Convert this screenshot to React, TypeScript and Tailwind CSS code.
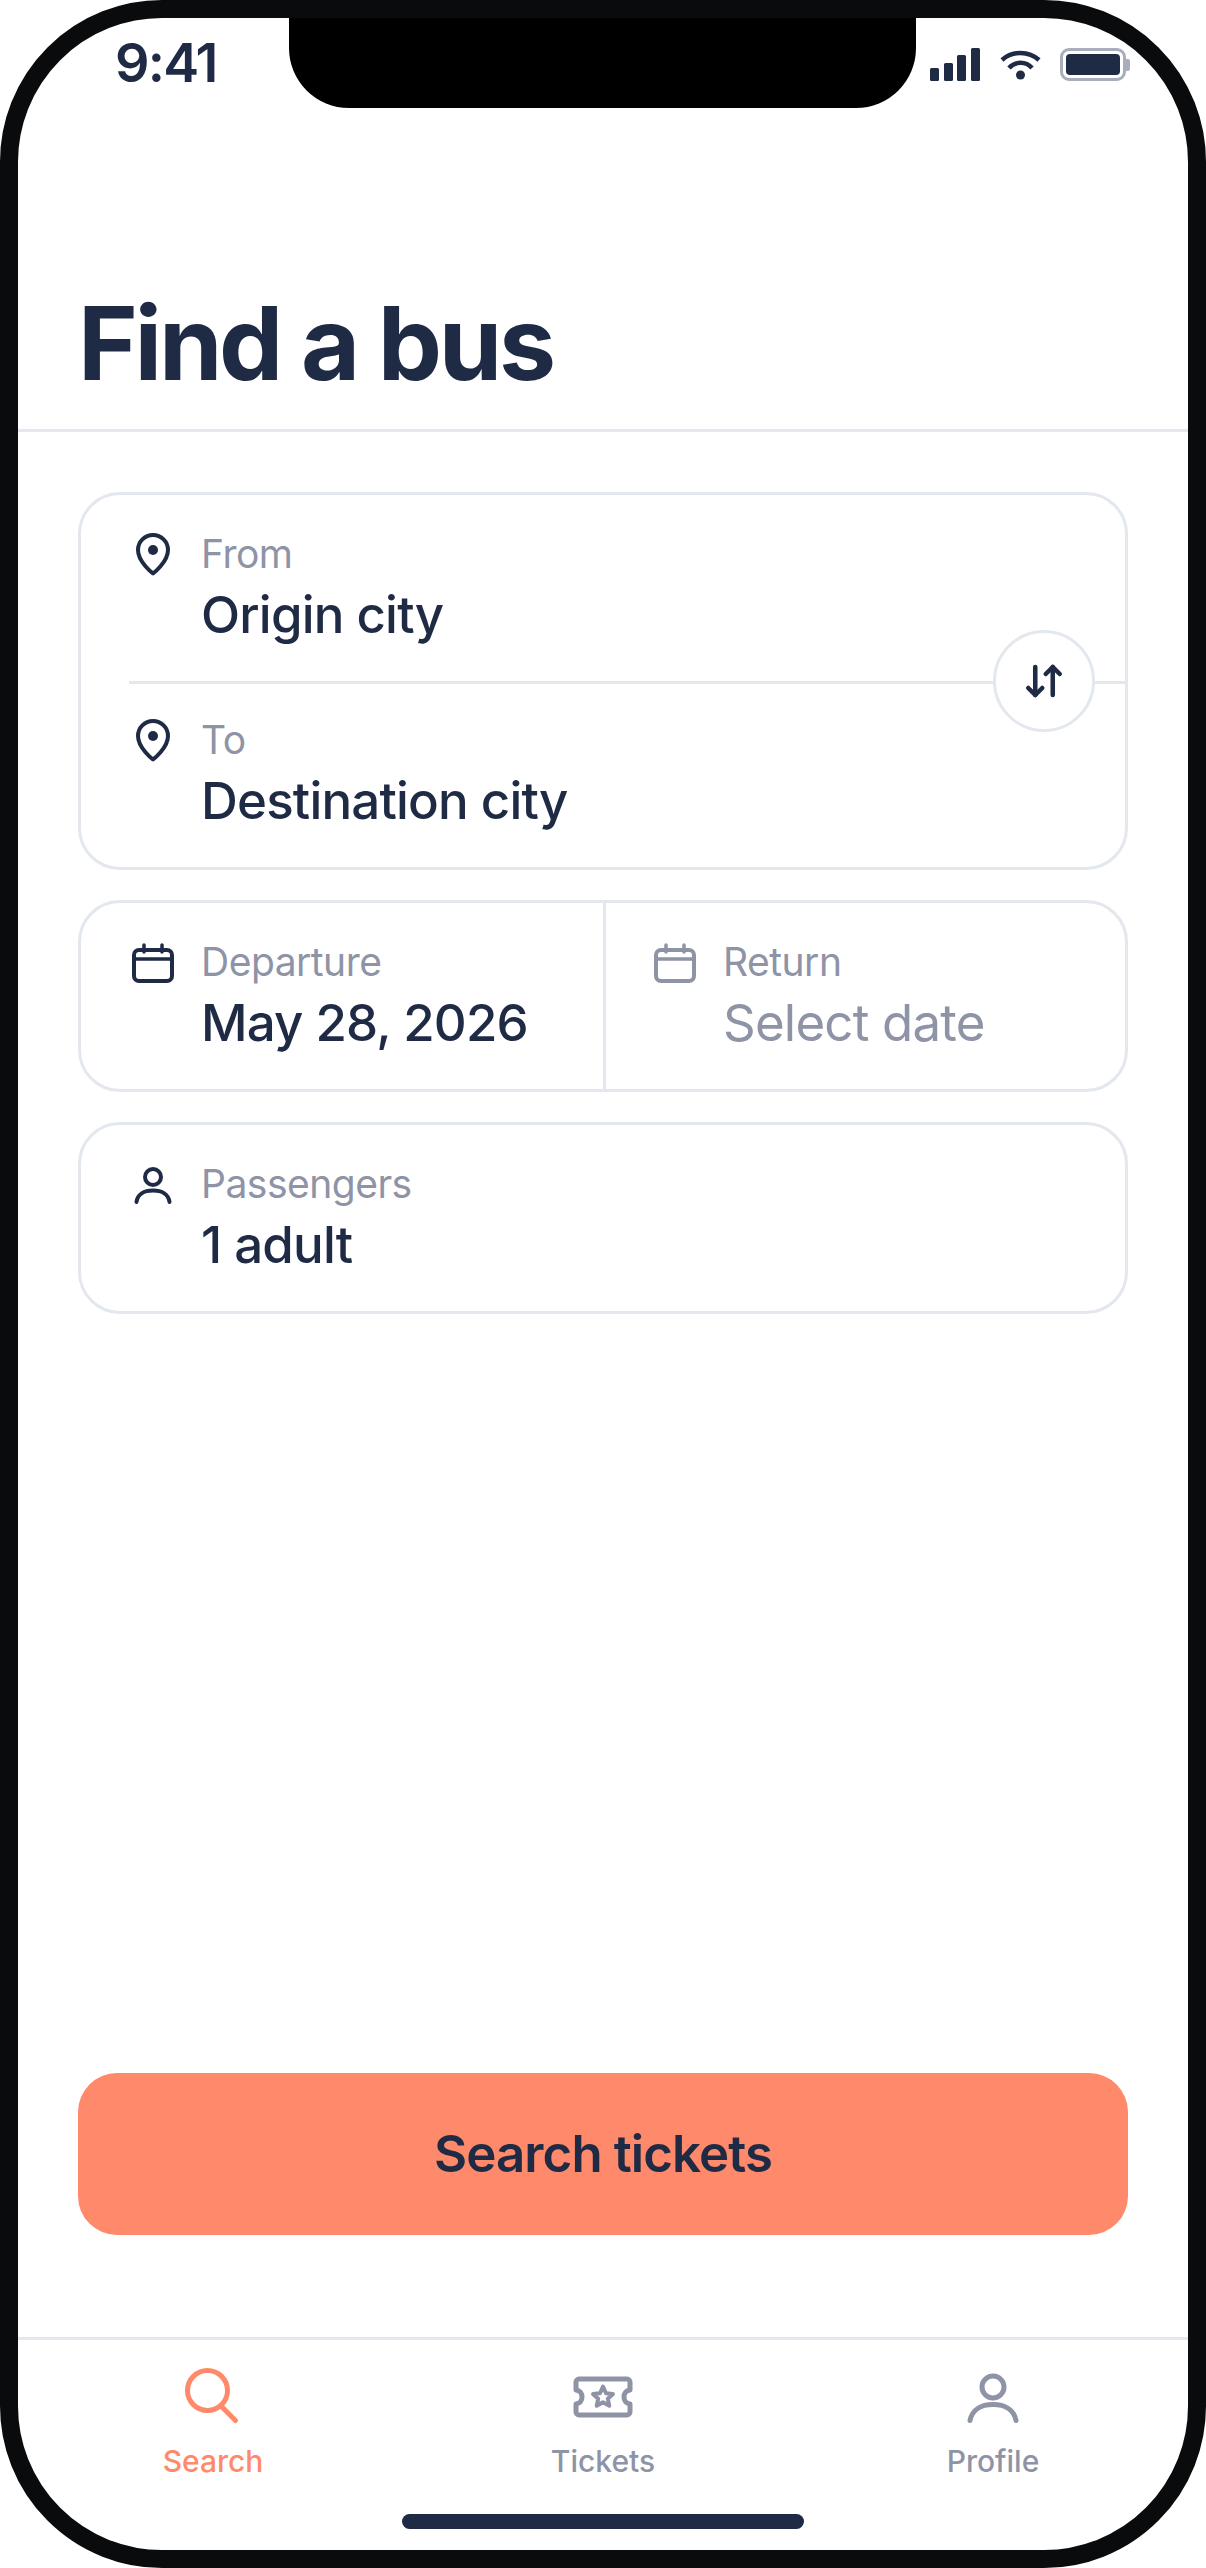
import { ArrowDownUp } from 'lucide-react';
import type { ReactNode } from 'react';

const NAVY = '#1f2a44';
const MUTED = '#8e93a6';
const CORAL = '#ff8a6b';

const PinIcon = () => (
  <svg width="54" height="54" viewBox="0 0 54 54" fill="none" className="shrink-0">
    <path
      d="M27 48.5C27 48.5 12 37 12 25C12 16.7 18.7 10 27 10C35.3 10 42 16.7 42 25C42 37 27 48.5 27 48.5Z"
      stroke={NAVY}
      strokeWidth="4"
      strokeLinejoin="round"
    />
    <circle cx="27" cy="25" r="5" fill={NAVY} />
  </svg>
);

const CalendarIcon = ({ color = NAVY }: { color?: string }) => (
  <svg width="54" height="54" viewBox="0 0 54 54" fill="none" className="shrink-0">
    <rect x="8" y="17" width="38" height="31" rx="5" stroke={color} strokeWidth="4" />
    <path d="M8 26H46M18 12V19M36 12V19" stroke={color} strokeWidth="3.5" strokeLinecap="round" />
  </svg>
);

const PersonIcon = () => (
  <svg width="54" height="54" viewBox="0 0 54 54" fill="none" className="shrink-0">
    <circle cx="27" cy="22" r="8" stroke={NAVY} strokeWidth="4" />
    <path d="M10.500 47C11.500 39.500 18 35.500 27 35.500C36 35.500 42.500 39.500 43.500 47" stroke={NAVY} strokeWidth="4" strokeLinecap="round" />
  </svg>
);

const SearchIcon = () => (
  <svg width="66" height="66" viewBox="0 0 66 66" fill="none">
    <circle cx="27.500" cy="25.500" r="20" stroke={CORAL} strokeWidth="5" />
    <path d="M41 41L55.500 55.500" stroke={CORAL} strokeWidth="5" strokeLinecap="round" />
  </svg>
);

const TicketIcon = () => (
  <svg width="66" height="66" viewBox="0 0 66 66" fill="none">
    <path
      d="M9 14H57C58.500 14 60 15.500 60 17V25C56 25.500 54 28.500 54 32C54 35.500 56 38.500 60 39V47C60 48.500 58.500 50 57 50H9C7.500 50 6 48.500 6 47V39C10 38.500 12 35.500 12 32C12 28.500 10 25.500 6 25V17C6 15.500 7.500 14 9 14Z"
      stroke={MUTED}
      strokeWidth="5"
      strokeLinejoin="round"
    />
    <path
      d="M33 21.500L36 28.200L43 29L37.800 33.700L39.300 40.800L33 37.200L26.700 40.800L28.200 33.700L23 29L30 28.200Z"
      stroke={MUTED}
      strokeWidth="4"
      strokeLinejoin="round"
    />
  </svg>
);

const ProfileIcon = () => (
  <svg width="66" height="66" viewBox="0 0 66 66" fill="none">
    <circle cx="33" cy="22" r="11" stroke={MUTED} strokeWidth="5" />
    <path d="M10 55.500C12 45 21 39.500 33 39.500C45 39.500 54 45 56 55.500" stroke={MUTED} strokeWidth="5" strokeLinecap="round" />
  </svg>
);

const Field = ({ icon, label, value, muted }: { icon: ReactNode; label: string; value: string; muted?: boolean }) => (
  <div className="flex gap-[21px]">
    {icon}
    <div className="flex flex-col pt-[2px]">
      <span className="text-[39px] leading-[54px] tracking-[-0.5px] text-[#8e93a6]">{label}</span>
      <span className={`mt-[1px] text-[51px] leading-[66px] tracking-[-0.8px] ${muted ? 'text-[#8e93a6] font-normal' : 'text-[#1f2a44] font-medium'}`}>{value}</span>
    </div>
  </div>
);

const StatusIcons = () => (
  <div className="flex items-center">
    <svg width="50" height="33" viewBox="0 0 50 33" fill={NAVY}>
      <rect x="0" y="20" width="9" height="13" rx="1.500" />
      <rect x="14" y="15" width="9" height="18" rx="1.500" />
      <rect x="27" y="7" width="9" height="26" rx="1.500" />
      <rect x="41" y="0" width="9" height="33" rx="1.500" />
    </svg>
    <svg width="41" height="30" viewBox="0 0 41 30" fill="none" stroke={NAVY} strokeWidth="4.500" className="ml-[20px]">
      <path d="M2 10C12 0.500 29 0.500 39 10" />
      <path d="M9 18C15 11 26 11 32 18" />
      <circle cx="20.500" cy="25" r="4.500" fill={NAVY} stroke="none" />
    </svg>
    <div className="flex items-center ml-[19px]">
      <div className="w-[66px] h-[33px] rounded-[9px] border-[3px] border-[#a9aebd] p-[3px]">
        <div className="w-full h-full rounded-[4px] bg-[#1f2a44]" />
      </div>
      <div className="w-[4px] h-[12px] rounded-r-[2px] bg-[#a9aebd]" />
    </div>
  </div>
);

const TabItem = ({ icon, label, active }: { icon: ReactNode; label: string; active?: boolean }) => (
  <div className="flex-1 flex flex-col items-center gap-[9px]">
    <div className="h-[66px] flex items-center justify-center">{icon}</div>
    <span className={`text-[30px] leading-[42px] font-medium ${active ? 'text-[#ff8a6b]' : 'text-[#8e93a6]'}`}>{label}</span>
  </div>
);

export default function App() {
  return (
    <div className="w-[1206px] h-[2568px] bg-white">
      <div
        className="relative w-full h-full rounded-[162px] border-[18px] border-[#0a0b0d] bg-white overflow-hidden flex flex-col"
        style={{ fontFamily: 'Inter, "Liberation Sans", sans-serif' }}
      >
        {/* notch */}
        <div className="absolute top-0 left-[271px] w-[627px] h-[90px] bg-black rounded-b-[60px]" />

        {/* status bar */}
        <div className="h-[75px] shrink-0 flex items-start justify-between pl-[97px] pr-[58px] pt-[30px]">
          <span className="-mt-[2px] text-[54px] leading-[33px] font-semibold tracking-[-1.8px] text-[#1f2a44]">9:41</span>
          <StatusIcons />
        </div>

        {/* header */}
        <div className="h-[339px] shrink-0 flex items-end px-[60px] pb-[28px] border-b-[3px] border-[#e3e7ee]">
          <h1 className="text-[102px] leading-[116px] font-bold text-[#1f2a44] tracking-[-3.3px]">Find a bus</h1>
        </div>

        {/* search form */}
        <div className="flex-1 flex flex-col px-[60px] pt-[60px] gap-[30px]">
          <div className="relative h-[378px] shrink-0 rounded-[42px] border-[3px] border-[#e3e7ee] flex flex-col">
            <div className="h-[186px] pl-[45px] pt-[30px]">
              <Field icon={<PinIcon />} label="From" value="Origin city" />
            </div>
            <div className="ml-[48px] h-[3px] bg-[#e3e7ee]" />
            <div className="flex-1 pl-[45px] pt-[27px]">
              <Field icon={<PinIcon />} label="To" value="Destination city" />
            </div>
            <div className="absolute right-[30px] top-[135px] w-[102px] h-[102px] rounded-full bg-white border-[3px] border-[#e3e7ee] flex items-center justify-center">
              <ArrowDownUp size={42} color={NAVY} strokeWidth={2.6} />
            </div>
          </div>

          <div className="h-[192px] shrink-0 rounded-[42px] border-[3px] border-[#e3e7ee] flex">
            <div className="flex-1 pl-[45px] pt-[30px]">
              <Field icon={<CalendarIcon />} label="Departure" value="May 28, 2026" />
            </div>
            <div className="flex-1 pl-[42px] pt-[30px] border-l-[3px] border-[#e3e7ee]">
              <Field icon={<CalendarIcon color={MUTED} />} label="Return" value="Select date" muted />
            </div>
          </div>

          <div className="h-[192px] shrink-0 rounded-[42px] border-[3px] border-[#e3e7ee] pl-[45px] pt-[30px]">
            <Field icon={<PersonIcon />} label="Passengers" value="1 adult" />
          </div>

          <div className="mt-auto mb-[102px] h-[162px] shrink-0 rounded-[39px] bg-[#ff8a6b] flex items-center justify-center">
            <span className="text-[51px] font-semibold tracking-[-0.9px] text-[#1f2a44]">Search tickets</span>
          </div>
        </div>

        {/* tab bar */}
        <div className="relative h-[213px] shrink-0 border-t-[3px] border-[#e3e7ee] flex items-start pt-[25px]">
          <TabItem icon={<SearchIcon />} label="Search" active />
          <TabItem icon={<TicketIcon />} label="Tickets" />
          <TabItem icon={<ProfileIcon />} label="Profile" />
          <div className="absolute bottom-[21px] left-[384px] w-[402px] h-[15px] rounded-full bg-[#1f2a44]" />
        </div>
      </div>
    </div>
  );
}
